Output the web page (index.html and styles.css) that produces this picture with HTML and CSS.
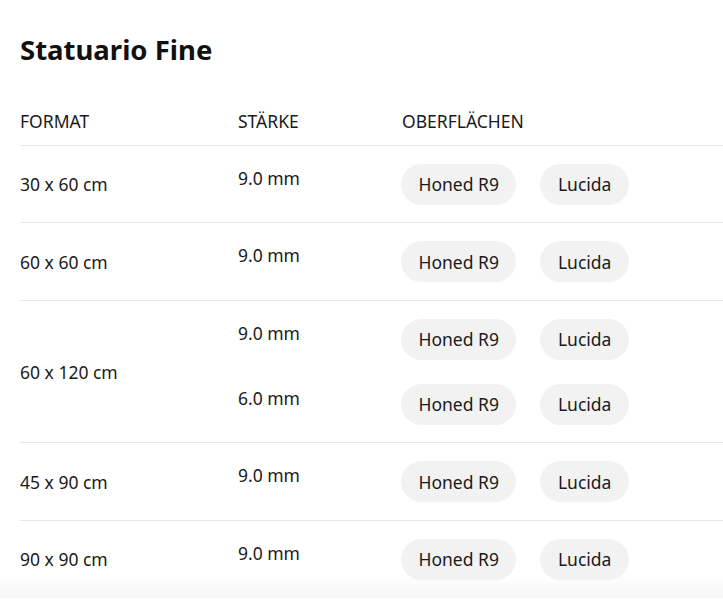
FILE: index.html
```html
<!DOCTYPE html>
<html lang="de">
<head>
<meta charset="utf-8">
<title>Statuario Fine</title>
<link rel="stylesheet" href="styles.css">
</head>
<body>
<main class="page">
  <h1 class="title">Statuario Fine</h1>
  <div class="table">
    <div class="head">
      <div>FORMAT</div>
      <div>STÄRKE</div>
      <div>OBERFLÄCHEN</div>
    </div>
    <div class="row">
      <div class="format">30 x 60 cm</div>
      <div class="variants">
        <div class="variant"><div class="thick">9.0 mm</div><div class="pills"><span class="pill">Honed R9</span><span class="pill">Lucida</span></div></div>
      </div>
    </div>
    <div class="row">
      <div class="format">60 x 60 cm</div>
      <div class="variants">
        <div class="variant"><div class="thick">9.0 mm</div><div class="pills"><span class="pill">Honed R9</span><span class="pill">Lucida</span></div></div>
      </div>
    </div>
    <div class="row">
      <div class="format">60 x 120 cm</div>
      <div class="variants">
        <div class="variant"><div class="thick">9.0 mm</div><div class="pills"><span class="pill">Honed R9</span><span class="pill">Lucida</span></div></div>
        <div class="variant"><div class="thick">6.0 mm</div><div class="pills"><span class="pill">Honed R9</span><span class="pill">Lucida</span></div></div>
      </div>
    </div>
    <div class="row">
      <div class="format">45 x 90 cm</div>
      <div class="variants">
        <div class="variant"><div class="thick">9.0 mm</div><div class="pills"><span class="pill">Honed R9</span><span class="pill">Lucida</span></div></div>
      </div>
    </div>
    <div class="row">
      <div class="format">90 x 90 cm</div>
      <div class="variants">
        <div class="variant"><div class="thick">9.0 mm</div><div class="pills"><span class="pill">Honed R9</span><span class="pill">Lucida</span></div></div>
      </div>
    </div>
  </div>
</main>
<div class="fade"></div>
</body>
</html>
```
FILE: styles.css
```css
* { box-sizing: border-box; }
html, body { margin: 0; padding: 0; background: #fff; }
body {
  font-family: "Noto Sans", "Open Sans", sans-serif;
  color: #1a1a1a;
  overflow: hidden;
}
.page { padding: 32px 0 0 20px; }
.title {
  margin: 0;
  font-size: 27.5px;
  line-height: 36px;
  font-weight: 700;
  color: #111;
}
.table { margin-top: 41px; }
.head {
  display: grid;
  grid-template-columns: 218px 164px 1fr;
  font-size: 17.5px;
  line-height: 24px;
  padding-bottom: 11.5px;
  border-bottom: 1px solid #e8e8e8;
}
.row {
  display: grid;
  grid-template-columns: 218px 1fr;
  padding: 18px 0 17.5px;
  border-bottom: 1px solid #e8e8e8;
  font-size: 17.5px;
}
.format { align-self: center; line-height: 24px; }
.variants { display: flex; flex-direction: column; gap: 24px; }
.variant { display: grid; grid-template-columns: 163px 1fr; }
.thick { line-height: 24px; padding-top: 2px; }
.pills { display: flex; gap: 24px; }
.pill {
  display: inline-flex;
  align-items: center;
  height: 41px;
  padding: 0 17.5px;
  border-radius: 21px;
  background: #f2f2f2;
  font-size: 17.5px;
}
.fade {
  position: fixed;
  left: 0; right: 0; bottom: 5px;
  height: 24px;
  background: linear-gradient(to bottom, rgba(245,245,245,0), rgba(245,245,245,0.9));
  pointer-events: none;
}
```
